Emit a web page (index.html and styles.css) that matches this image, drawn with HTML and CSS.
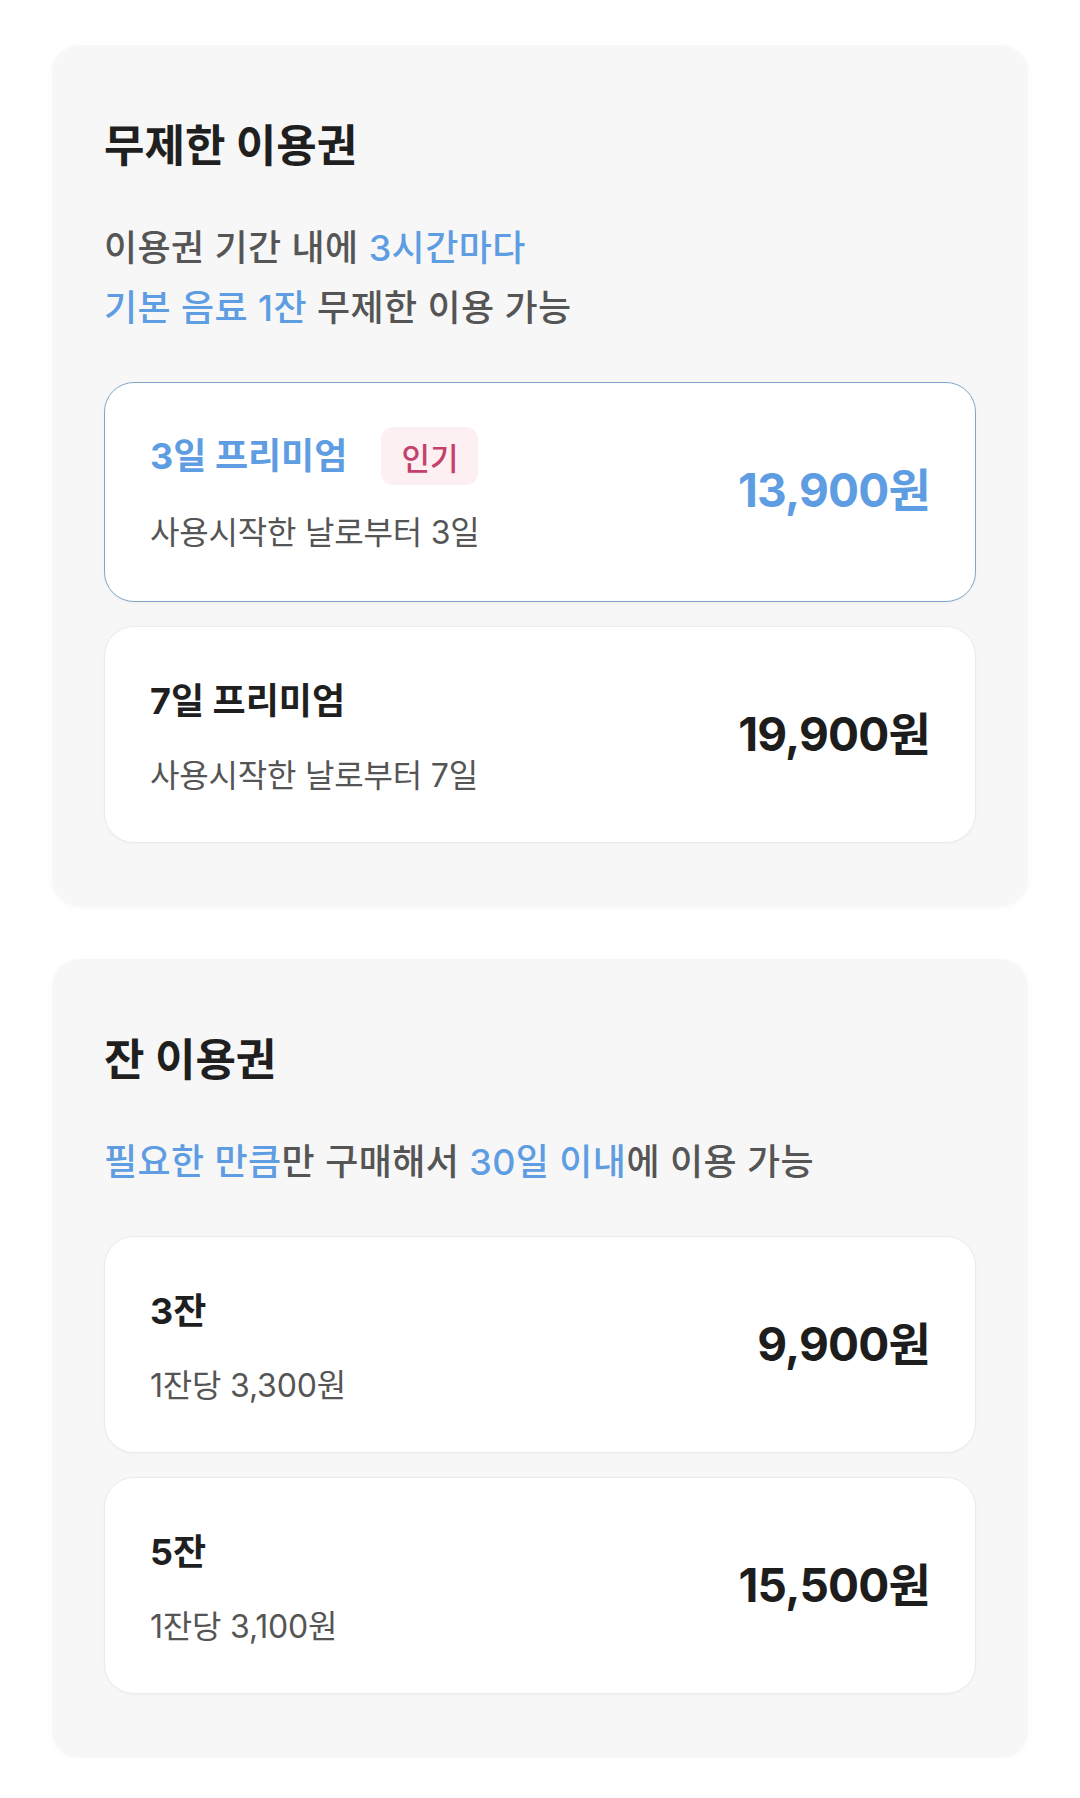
FILE: index.html
```html
<!DOCTYPE html>
<html lang="ko">
<head>
<meta charset="utf-8">
<title>이용권</title>
<link rel="stylesheet" href="styles.css">
</head>
<body>
<main class="page">
  <section class="plan-card">
    <h2 class="plan-title">무제한 이용권</h2>
    <p class="plan-desc">이용권 기간 내에 <span class="hl">3시간마다</span><br><span class="hl">기본 음료 1잔</span> 무제한 이용 가능</p>
    <ul class="options">
      <li class="option selected">
        <div class="opt-info">
          <div class="opt-head"><span class="opt-name">3일 프리미엄</span><span class="badge">인기</span></div>
          <div class="opt-sub">사용시작한 날로부터 3일</div>
        </div>
        <div class="opt-price">13,900원</div>
      </li>
      <li class="option">
        <div class="opt-info">
          <div class="opt-head"><span class="opt-name">7일 프리미엄</span></div>
          <div class="opt-sub">사용시작한 날로부터 7일</div>
        </div>
        <div class="opt-price">19,900원</div>
      </li>
    </ul>
  </section>

  <section class="plan-card">
    <h2 class="plan-title">잔 이용권</h2>
    <p class="plan-desc"><span class="hl">필요한 만큼</span>만 구매해서 <span class="hl">30일 이내</span>에 이용 가능</p>
    <ul class="options">
      <li class="option">
        <div class="opt-info">
          <div class="opt-head"><span class="opt-name">3잔</span></div>
          <div class="opt-sub">1잔당 3,300원</div>
        </div>
        <div class="opt-price">9,900원</div>
      </li>
      <li class="option">
        <div class="opt-info">
          <div class="opt-head"><span class="opt-name">5잔</span></div>
          <div class="opt-sub">1잔당 3,100원</div>
        </div>
        <div class="opt-price">15,500원</div>
      </li>
    </ul>
  </section>
</main>
</body>
</html>
```

FILE: styles.css
```css
* {
  box-sizing: border-box;
}

html, body {
  margin: 0;
  padding: 0;
  background: #ffffff;
}

body {
  font-family: Inter, "Noto Sans CJK KR", sans-serif;
  color: #1f1f1f;
}

.page {
  display: flex;
  flex-direction: column;
  gap: 52px;
  padding: 45px 52px 0;
}

.plan-card {
  background: #f7f7f7;
  border-radius: 28px;
  padding: 75px 52px 64px;
  box-shadow: 0 2px 8px rgba(0, 0, 0, 0.025);
}

.plan-title {
  margin: 0;
  font-size: 44px;
  line-height: 52px;
  font-weight: 700;
  letter-spacing: 0;
  color: #1f1f1f;
}

.plan-desc {
  margin: 46px 0 0;
  font-size: 36px;
  line-height: 60px;
  font-weight: 500;
  letter-spacing: 0.4px;
  color: #555555;
}

.hl {
  color: #5f9de2;
}

.options {
  list-style: none;
  margin: 44px 0 0;
  padding: 0;
  display: flex;
  flex-direction: column;
  gap: 24px;
}

.option {
  display: flex;
  align-items: center;
  justify-content: space-between;
  background: #ffffff;
  border: 1px solid #ebebeb;
  border-radius: 30px;
  padding: 45px 45px 46px;
  box-shadow: 0 1px 3px rgba(0, 0, 0, 0.03);
}

.option.selected {
  border: 1.5px solid #7fa6ca;
  padding-top: 44px;
  padding-bottom: 48px;
}

.opt-info {
  display: flex;
  flex-direction: column;
  gap: 26px;
}

.selected .opt-info {
  gap: 28px;
}

.opt-head {
  display: flex;
  align-items: center;
  gap: 34px;
  height: 58px;
}

.opt-name {
  font-size: 36px;
  line-height: 46px;
  font-weight: 700;
  letter-spacing: 0;
  color: #1f1f1f;
}

.selected .opt-name {
  color: #5f9de2;
}

.badge {
  display: inline-flex;
  align-items: center;
  justify-content: center;
  height: 58px;
  padding: 0 20px;
  border-radius: 12px;
  background: #fdf0f3;
  color: #c4416b;
  font-size: 31px;
  font-weight: 500;
  letter-spacing: 0;
}

.opt-sub {
  font-size: 32px;
  line-height: 40px;
  font-weight: 400;
  letter-spacing: -0.2px;
  color: #555555;
}

.opt-price {
  font-size: 46px;
  line-height: 56px;
  font-weight: 700;
  letter-spacing: -0.8px;
  color: #1d1d1d;
}

.selected .opt-price {
  color: #5f9de2;
}
```
